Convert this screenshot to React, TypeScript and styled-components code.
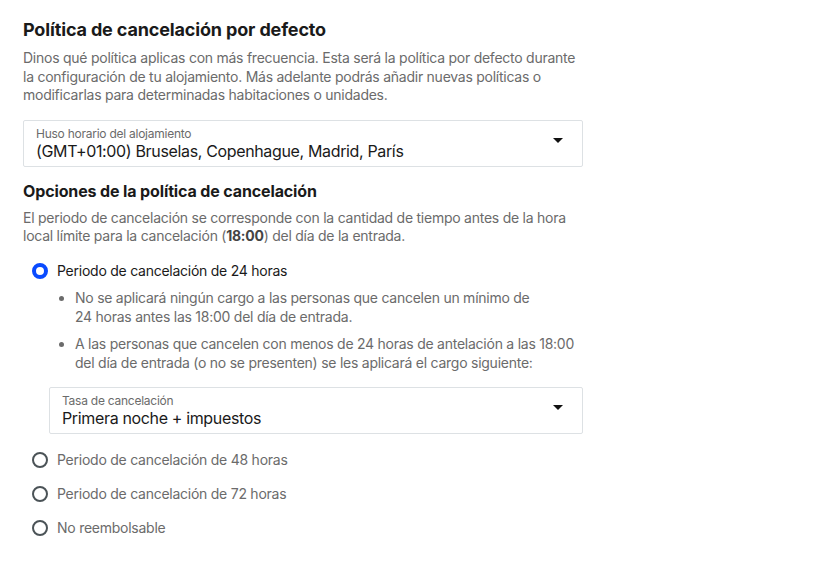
/* Core */
import styled, { createGlobalStyle } from 'styled-components';

const COLORS = {
    text:   '#1a1a1a',
    muted:  '#6b6b6b',
    border: '#dde1e4',
    radio:  '#4b5357',
    blue:   '#0a4bff',
};

const OTHER_OPTIONS = [
    'Periodo de cancelación de 48 horas',
    'Periodo de cancelación de 72 horas',
    'No reembolsable',
];

export default function App() {
    return (
        <>
            <GlobalStyle />
            <Page>
                <Title>Política de cancelación por defecto</Title>
                <Description>
                    Dinos qué política aplicas con más frecuencia. Esta será la política por defecto durante
                    la configuración de tu alojamiento. Más adelante podrás añadir nuevas políticas o
                    modificarlas para determinadas habitaciones o unidades.
                </Description>

                <Select>
                    <SelectText>
                        <SelectLabel>Huso horario del alojamiento</SelectLabel>
                        <SelectValue>(GMT+01:00) Bruselas, Copenhague, Madrid, París</SelectValue>
                    </SelectText>
                    <Caret />
                </Select>

                <Subtitle>Opciones de la política de cancelación</Subtitle>
                <Description>
                    El periodo de cancelación se corresponde con la cantidad de tiempo antes de la hora
                    local límite para la cancelación (<strong>18:00</strong>) del día de la entrada.
                </Description>

                <Options>
                    <RadioRow>
                        <Radio $checked />
                        <RadioLabel $checked>Periodo de cancelación de 24 horas</RadioLabel>
                    </RadioRow>
                    <Details>
                        <Bullets>
                            <li>
                                No se aplicará ningún cargo a las personas que cancelen un mínimo de
                                <br />
                                24 horas antes las 18:00 del día de entrada.
                            </li>
                            <li>
                                A las personas que cancelen con menos de 24 horas de antelación a las 18:00
                                del día de entrada (o no se presenten) se les aplicará el cargo siguiente:
                            </li>
                        </Bullets>
                        <Select $nested>
                            <SelectText>
                                <SelectLabel>Tasa de cancelación</SelectLabel>
                                <SelectValue>Primera noche + impuestos</SelectValue>
                            </SelectText>
                            <Caret />
                        </Select>
                    </Details>
                    {OTHER_OPTIONS.map((label) => (
                        <RadioRow key = { label }>
                            <Radio />
                            <RadioLabel>{label}</RadioLabel>
                        </RadioRow>
                    ))}
                </Options>
            </Page>
        </>
    );
}

/* Styles */
const GlobalStyle = createGlobalStyle`
  body {
    margin: 0;
    background: #fff;
    font-family: Inter, "Noto Sans", sans-serif;
    color: ${ COLORS.text };
  }
`;

const Page = styled.div`
  width: 560px;
  padding: 18px 0 0 23px;
`;

const Title = styled.h1`
  margin: 0;
  font-size: 18px;
  line-height: 24px;
  font-weight: 700;
  letter-spacing: -0.15px;
`;

const Subtitle = styled.h2`
  margin: 13px 0 0;
  font-size: 16px;
  line-height: 22px;
  font-weight: 700;
  letter-spacing: -0.13px;
`;

const Description = styled.p`
  margin: 7px 0 0;
  font-size: 14px;
  line-height: 18.5px;
  letter-spacing: -0.25px;
  color: ${ COLORS.muted };

  strong {
    color: #444;
    font-weight: 700;
  }
`;

const Select = styled.div<{ $nested?: boolean }>`
  display: flex;
  align-items: center;
  justify-content: space-between;
  height: 47px;
  box-sizing: border-box;
  margin-top: 15px;
  padding: 0 19px 0 12px;
  border: 1px solid ${ COLORS.border };
  border-radius: 2px;
`;

const SelectText = styled.div`
  display: flex;
  flex-direction: column;
`;

const SelectLabel = styled.span`
  font-size: 12px;
  line-height: 15px;
  letter-spacing: -0.25px;
  color: ${ COLORS.muted };
`;

const SelectValue = styled.span`
  font-size: 16px;
  line-height: 20px;
  letter-spacing: -0.35px;
  color: ${ COLORS.text };
`;

const Caret = styled.span`
  width: 0;
  height: 0;
  margin-top: -6px;
  border-left: 5px solid transparent;
  border-right: 5px solid transparent;
  border-top: 5px solid #111;
`;

const Options = styled.div`
  display: flex;
  flex-direction: column;
  margin-top: 13px;
`;

const RadioRow = styled.label`
  display: flex;
  align-items: center;
  gap: 9px;
  height: 24px;
  padding-left: 9px;
  & + & {
    margin-top: 10px;
  }
`;

const Radio = styled.span<{ $checked?: boolean }>`
  width: 16px;
  height: 16px;
  box-sizing: border-box;
  border-radius: 50%;
  border: ${ ({ $checked }) => ($checked ? `4.5px solid ${ COLORS.blue }` : `2px solid ${ COLORS.radio }`) };
`;

const RadioLabel = styled.span<{ $checked?: boolean }>`
  font-size: 14px;
  letter-spacing: -0.25px;
  color: ${ ({ $checked }) => ($checked ? COLORS.text : COLORS.muted) };
`;

const Details = styled.div`
  display: flex;
  flex-direction: column;
  padding-left: 26px;
  margin-bottom: 14px;
`;

const Bullets = styled.ul`
  margin: 5px 0 0;
  padding: 0 0 0 26px;
  font-size: 14px;
  line-height: 19px;
  letter-spacing: -0.25px;
  color: ${ COLORS.muted };

  li + li {
    margin-top: 8px;
  }
`;
